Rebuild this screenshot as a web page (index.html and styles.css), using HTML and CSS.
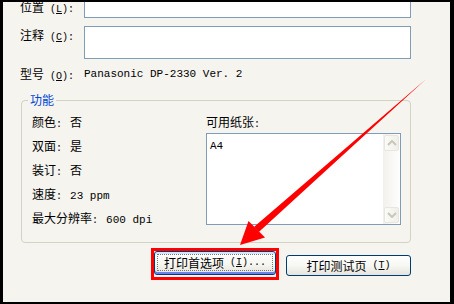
FILE: index.html
```html
<!DOCTYPE html>
<html>
<head>
<meta charset="utf-8">
<link rel="stylesheet" href="styles.css">
</head>
<body>
<div class="dialog">
  <div class="form">
    <div class="row row1">
      <span class="lbl">位置<span class="a"> (<u>L</u>):</span></span>
      <div class="input input1"></div>
    </div>
    <div class="row row2">
      <span class="lbl">注释<span class="a"> (<u>C</u>):</span></span>
      <div class="input input2"></div>
    </div>
    <div class="row row3">
      <span class="lbl">型号<span class="a"> (<u>O</u>):</span></span>
      <span class="mono">Panasonic DP-2330 Ver. 2</span>
    </div>
  </div>
  <fieldset class="group">
    <legend class="legend">功能</legend>
    <div class="group-inner">
      <div class="features">
        <div class="feat">颜色<span class="a">: </span><span class="val">否</span></div>
        <div class="feat">双面<span class="a">: </span><span class="val">是</span></div>
        <div class="feat">装订<span class="a">: </span><span class="val">否</span></div>
        <div class="feat">速度<span class="a">: </span><span class="val num">23 ppm</span></div>
        <div class="feat">最大分辨率<span class="a">: </span><span class="val num">600 dpi</span></div>
      </div>
      <div class="paper">
        <div class="paper-title">可用纸张<span class="a">:</span></div>
        <div class="listbox">
          <div class="list-items"><span class="item">A4</span></div>
          <div class="scrollbar">
            <div class="sbtn">
              <svg width="10" height="6" viewBox="0 0 10 6"><path d="M1 5 L5 1 L9 5" fill="none" stroke="#c9c7ba" stroke-width="2"/></svg>
            </div>
            <div class="track"></div>
            <div class="sbtn">
              <svg width="10" height="6" viewBox="0 0 10 6"><path d="M1 1 L5 5 L9 1" fill="none" stroke="#c9c7ba" stroke-width="2"/></svg>
            </div>
          </div>
        </div>
      </div>
    </div>
  </fieldset>
  <div class="buttons">
    <div class="btn btn-focus"><span class="focus-ring">打印首选项<span class="a"> (<u>I</u>)...</span></span></div>
    <div class="btn btn-test">打印测试页<span class="a"> (<u>T</u>)</span></div>
  </div>
</div>
<div class="redbox"></div>
<svg class="arrow" width="454" height="304" viewBox="0 0 454 304">
  <polygon points="425.6,79.4 424.4,80.6 254.2,226.8 258.8,232" fill="#ff0000"/>
  <polygon points="240,245 248.5,221 265,237.5" fill="#ff0000"/>
</svg>
</body>
</html>
```

FILE: styles.css
```css
* { box-sizing: border-box; }
html, body { margin: 0; padding: 0; }
body {
  position: relative;
  width: 454px;
  height: 304px;
  background: #000;
  overflow: hidden;
  font-family: "Noto Sans CJK SC", "Noto Sans", sans-serif;
  font-size: 12px;
  line-height: 14px;
  color: #000;
}
.a {
  font-family: "Liberation Mono", "DejaVu Sans Mono", monospace;
  font-size: 10px;
  line-height: 0;
  white-space: pre;
}
.dialog {
  margin: 2px 4px 2px 3px;
  width: 447px;
  height: 300px;
  background: #f5f4ef;
  overflow: hidden;
  padding-left: 17px;
}
.form { margin-top: -4px; }
.row { display: flex; align-items: flex-start; }
.lbl { width: 64px; height: 16px; padding-top: 2px; white-space: nowrap; }
u { text-decoration: underline; }
.input {
  width: 327px;
  background: #fff;
  border: 1px solid #7f9db9;
}
.input1 { height: 20px; }
.row2 { margin-top: 8px; }
.input2 { height: 33px; }
.row3 { margin-top: 8px; }
.row3 .lbl { padding-top: 0; height: 14px; }
.mono {
  font-family: "Liberation Mono", "DejaVu Sans Mono", monospace;
  font-size: 11px;
  line-height: 14px;
}
.group {
  margin: 12px 0 0 1px;
  padding: 0;
  width: 390px;
  border: 1px solid #d3d2c4;
  border-radius: 4px;
  min-width: 0;
}
.legend {
  margin-left: 6px;
  padding: 0 2px;
  color: #0046d5;
  line-height: 14px;
}
.group-inner {
  display: flex;
  padding: 8px 0 17px 10px;
}
.features {
  width: 174px;
  display: flex;
  flex-direction: column;
  gap: 10px;
}
.feat { height: 14px; white-space: nowrap; }
.val { margin-left: 2px; }
.num {
  font-family: "Liberation Mono", "DejaVu Sans Mono", monospace;
  font-size: 11px;
  line-height: 0;
}
.paper { width: 195px; }
.paper-title { height: 14px; }
.listbox {
  margin-top: 4px;
  height: 92px;
  border: 1px solid #7f9db9;
  background: #fff;
  display: flex;
}
.list-items { flex: 1; padding: 3px 0 0 3px; }
.item {
  font-family: "Liberation Mono", "DejaVu Sans Mono", monospace;
  font-size: 11px;
}
.scrollbar {
  width: 17px;
  display: flex;
  flex-direction: column;
  background: linear-gradient(to right, #f3f1ec, #fefefe);
  padding: 1px;
}
.sbtn {
  height: 16px;
  border: 1px solid #e8e7df;
  border-radius: 2px;
  background: linear-gradient(to right, #fbfbf8, #f0efe8);
  display: flex;
  align-items: center;
  justify-content: center;
}
.track { flex: 1; }
.buttons {
  display: flex;
  align-items: flex-start;
  margin-top: 8px;
  padding-left: 134px;
}
.btn {
  border: 1px solid #003c74;
  border-radius: 3px;
  background: linear-gradient(#ffffff 0%, #f6f6f2 55%, #e4e3db 100%);
  display: flex;
  align-items: center;
  justify-content: center;
  white-space: nowrap;
  line-height: 14px;
}
.btn-focus {
  width: 122px;
  height: 24px;
  padding: 3px 3px 4px;
  box-shadow: inset 0 -2px 0 #6982ee, inset 0 2px 0 #cee7ff;
}
.focus-ring {
  flex: 1;
  height: 100%;
  display: flex;
  align-items: center;
  justify-content: center;
  outline: 1px dotted #777;
}
.btn-test {
  margin-left: 10px;
  margin-top: 4px;
  width: 125px;
  height: 21px;
}
.redbox {
  position: absolute;
  left: 151px;
  top: 248px;
  width: 128px;
  height: 32px;
  border: 3px solid #ff0000;
}
.arrow {
  position: absolute;
  left: 0;
  top: 0;
  pointer-events: none;
}
```
